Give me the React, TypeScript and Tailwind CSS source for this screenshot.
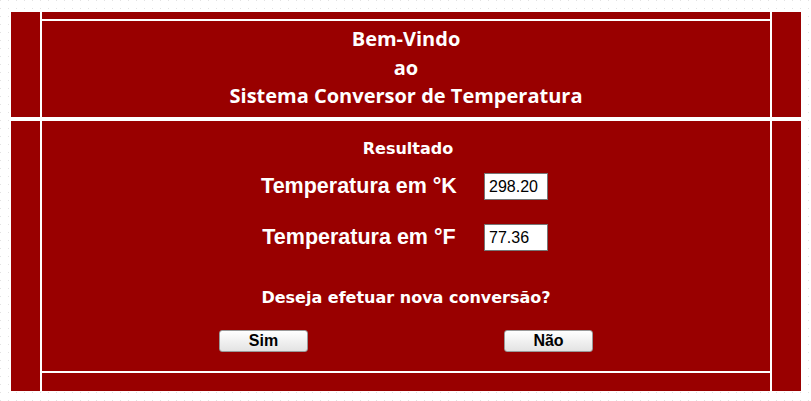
import React from 'react';

function TempRow({ label, value }: { label: string; value: string }) {
  return (
    <div className="flex h-[27px] items-center justify-center pr-[8px]">
      <div className="w-[206px] whitespace-nowrap text-center font-['Liberation_Sans',Arial,sans-serif] text-[21.5px] font-bold leading-[27px] text-white">
        {label}
      </div>
      <input
        type="text"
        readOnly
        value={value}
        className="ml-[22px] h-[27px] w-[64px] border border-[#767676] bg-white pl-[4px] font-['Liberation_Sans',Arial,sans-serif] text-[16px] text-black outline-none"
      />
    </div>
  );
}

function Btn({ children }: { children: React.ReactNode }) {
  return (
    <button className="h-[22px] w-[89px] rounded-[3px] border border-[#9a9a9a] bg-gradient-to-b from-white to-[#e3e3e3] font-['Liberation_Sans',Arial,sans-serif] text-[16px] font-bold leading-none text-black">
      {children}
    </button>
  );
}

export default function App() {
  return (
    <div className="h-[401px] w-[811px] bg-white bg-[radial-gradient(circle_at_0.5px_0.5px,#e2e2e2_0.8px,transparent_0.9px)] bg-[size:8px_8px] pl-[11px] pt-[12px] font-['Liberation_Sans',Arial,sans-serif]">
      <div className="grid w-[790px] grid-cols-[29px_728px_29px] gap-x-[2px] gap-y-[4px] bg-white">
        {/* header row */}
        <div className="h-[105px] bg-[#990000]" />
        <div className="flex h-[105px] flex-col bg-[#990000]">
          <div className="h-[7px]" />
          <div className="h-[2px] bg-white" />
          <div className="flex flex-1 flex-col items-center justify-center pb-[2px] font-['Open_Sans',sans-serif] text-[20px] font-bold leading-[28.5px] text-white">
            <div>Bem-Vindo</div>
            <div>ao</div>
            <div>Sistema Conversor de Temperatura</div>
          </div>
        </div>
        <div className="h-[105px] bg-[#990000]" />

        {/* result row */}
        <div className="h-[270px] bg-[#990000]" />
        <div className="flex h-[270px] flex-col bg-[#990000]">
          <div className="flex h-[250px] flex-col">
            <div className="mt-[18px] pl-[4px] text-center font-['DejaVu_Sans',Verdana,sans-serif] text-[16px] font-bold leading-[20px] text-white">
              Resultado
            </div>
            <div className="mt-[14px]">
              <TempRow label="Temperatura em °K" value="298.20" />
            </div>
            <div className="mt-[24px]">
              <TempRow label="Temperatura em °F" value="77.36" />
            </div>
            <div className="mt-[37px] text-center font-['DejaVu_Sans',Verdana,sans-serif] text-[16px] font-bold leading-[20px] text-white">
              Deseja efetuar nova conversão?
            </div>
            <div className="mt-[22px] flex justify-center gap-[196px]">
              <Btn>Sim</Btn>
              <Btn>Não</Btn>
            </div>
          </div>
          <div className="h-[2px] bg-white" />
          <div className="flex-1" />
        </div>
        <div className="h-[270px] bg-[#990000]" />
      </div>
    </div>
  );
}
